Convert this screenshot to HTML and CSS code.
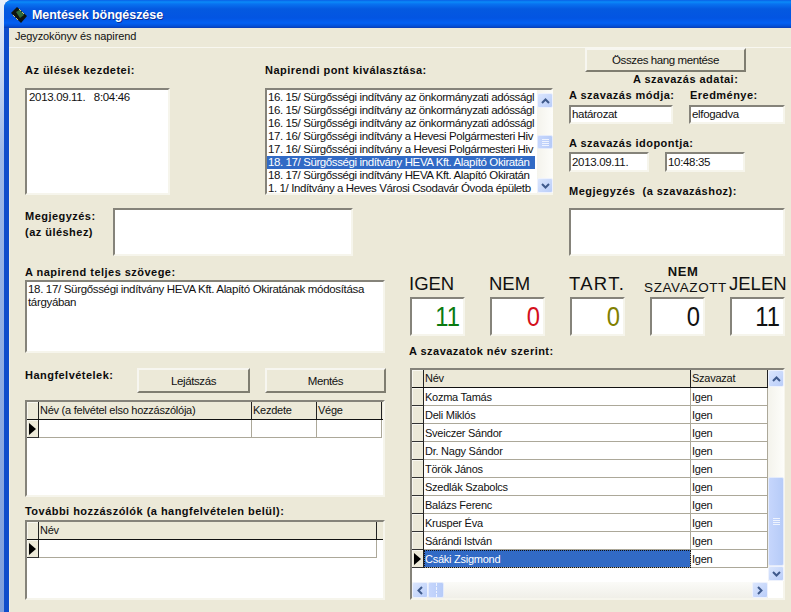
FILE: index.html
```html
<!DOCTYPE html>
<html lang="hu">
<head>
<meta charset="utf-8">
<title>Mentések böngészése</title>
<link rel="stylesheet" href="styles.css">
</head>
<body>
<div class="window">
  <div class="titlebar">
    <svg class="appicon" width="18" height="18" viewBox="0 0 18 18"><path d="M1 7 L7 1 L17 10 L11 17 Z" fill="#10140f"/><path d="M6 6 L10 3.8 L14 9 L10 12 Z" fill="#2f6b3a"/><path d="M3 9 L5 11 M6 12 L8 14 M9 3 L11 5 M12 6 L14 8" stroke="#c9c27a" stroke-width="1"/></svg>
    <span class="title">Mentések böngészése</span>
  </div>
  <div class="menubar"><span>Jegyzokönyv és napirend</span></div>
  <div class="client">
    <div class="upper">
      <div class="upper-left">
        <div class="lists">
          <div class="col-sessions">
            <div class="lbl">Az ülések kezdetei:</div>
            <div class="sunken listbox"><div class="item session">2013.09.11.&nbsp;&nbsp;&nbsp;8:04:46</div></div>
          </div>
          <div class="col-agenda">
            <div class="lbl">Napirendi pont kiválasztása:</div>
            <div class="sunken listbox agenda">
              <div class="items">
                <div class="item">16. 15/ Sürgősségi indítvány az önkormányzati adósságl</div>
                <div class="item">16. 15/ Sürgősségi indítvány az önkormányzati adósságl</div>
                <div class="item">16. 15/ Sürgősségi indítvány az önkormányzati adósságl</div>
                <div class="item">17. 16/ Sürgősségi indítvány a Hevesi Polgármesteri Hiv</div>
                <div class="item">17. 16/ Sürgősségi indítvány a Hevesi Polgármesteri Hiv</div>
                <div class="item selected">18. 17/ Sürgősségi indítvány HEVA Kft. Alapító Okiratán</div>
                <div class="item">18. 17/ Sürgősségi indítvány HEVA Kft. Alapító Okiratán</div>
                <div class="item">1. 1/ Indítvány a Heves Városi Csodavár Óvoda épületb</div>
              </div>
              <div class="vscroll list-scroll">
                <div class="sbtn"><svg width="9" height="6" viewBox="0 0 9 6"><path d="M1 5 L4.5 1.5 L8 5" class="chev"/></svg></div>
                <div class="sgap g1"></div>
                <div class="thumb t1"><i></i><i></i><i></i><i></i></div>
                <div class="sgap g2"></div>
                <div class="sbtn"><svg width="9" height="6" viewBox="0 0 9 6"><path d="M1 1 L4.5 4.5 L8 1" class="chev"/></svg></div>
              </div>
            </div>
          </div>
        </div>
        <div class="note-row">
          <div class="lbl note-lbl">Megjegyzés:<br>(az üléshez)</div>
          <div class="sunken note-box"></div>
        </div>
      </div>
      <div class="upper-right">
        <div class="raised btn btn-all">Összes hang mentése</div>
        <div class="lbl caption">A szavazás adatai:</div>
        <div class="pair labels-1"><div class="lbl w-mode">A szavazás módja:</div><div class="lbl">Eredménye:</div></div>
        <div class="pair inputs-1"><div class="sunken field f-mode">határozat</div><div class="sunken field f-result">elfogadva</div></div>
        <div class="lbl time-lbl">A szavazás idopontja:</div>
        <div class="pair inputs-2"><div class="sunken field f-date">2013.09.11.</div><div class="sunken field f-date">10:48:35</div></div>
        <div class="lbl vote-note-lbl">Megjegyzés&nbsp; (a szavazáshoz):</div>
        <div class="sunken vote-note"></div>
      </div>
    </div>
    <div class="lower">
      <div class="lower-left">
        <div class="lbl full-lbl">A napirend teljes szövege:</div>
        <div class="sunken fulltext">18. 17/ Sürgősségi indítvány HEVA Kft. Alapító Okiratának módosítása tárgyában</div>
        <div class="rec-row">
          <div class="lbl rec-lbl">Hangfelvételek:</div>
          <div class="raised btn btn-play">Lejátszás</div>
          <div class="raised btn btn-save">Mentés</div>
        </div>
        <div class="sunken grid grid-rec">
          <div class="row head">
            <div class="ind"></div><div class="cell c-rn">Név (a felvétel elso hozzászólója)</div><div class="cell c-rs">Kezdete</div><div class="cell c-re">Vége</div>
          </div>
          <div class="row">
            <div class="ind"><svg width="7" height="12" viewBox="0 0 7 12"><path d="M0 0 L7 6 L0 12 Z"/></svg></div><div class="cell c-rn"></div><div class="cell c-rs"></div><div class="cell c-re"></div>
          </div>
        </div>
        <div class="lbl more-lbl">További hozzászólók (a hangfelvételen belül):</div>
        <div class="sunken grid grid-more">
          <div class="row head"><div class="ind"></div><div class="cell c-mn">Név</div></div>
          <div class="row"><div class="ind"><svg width="7" height="12" viewBox="0 0 7 12"><path d="M0 0 L7 6 L0 12 Z"/></svg></div><div class="cell c-mn"></div></div>
        </div>
      </div>
      <div class="lower-right">
        <div class="counters">
          <div class="counter"><div class="c-label">IGEN</div><div class="sunken c-box green"><span class="c-num">11</span></div></div>
          <div class="counter"><div class="c-label">NEM</div><div class="sunken c-box red"><span class="c-num">0</span></div></div>
          <div class="counter"><div class="c-label tart">TART.</div><div class="sunken c-box olive"><span class="c-num">0</span></div></div>
          <div class="counter"><div class="c-label small"><span class="s1">NEM</span><span class="s2">SZAVAZOTT</span></div><div class="sunken c-box"><span class="c-num">0</span></div></div>
          <div class="counter"><div class="c-label">JELEN</div><div class="sunken c-box"><span class="c-num">11</span></div></div>
        </div>
        <div class="lbl names-lbl">A szavazatok név szerint:</div>
        <div class="sunken grid grid-votes">
          <div class="votes-main">
            <div class="row head"><div class="ind"></div><div class="cell c-vn">Név</div><div class="cell c-vv">Szavazat</div></div>
            <div class="row"><div class="ind"></div><div class="cell c-vn">Kozma Tamás</div><div class="cell c-vv">Igen</div></div>
            <div class="row"><div class="ind"></div><div class="cell c-vn">Deli Miklós</div><div class="cell c-vv">Igen</div></div>
            <div class="row"><div class="ind"></div><div class="cell c-vn">Sveiczer Sándor</div><div class="cell c-vv">Igen</div></div>
            <div class="row"><div class="ind"></div><div class="cell c-vn">Dr. Nagy Sándor</div><div class="cell c-vv">Igen</div></div>
            <div class="row"><div class="ind"></div><div class="cell c-vn">Török János</div><div class="cell c-vv">Igen</div></div>
            <div class="row"><div class="ind"></div><div class="cell c-vn">Szedlák Szabolcs</div><div class="cell c-vv">Igen</div></div>
            <div class="row"><div class="ind"></div><div class="cell c-vn">Balázs Ferenc</div><div class="cell c-vv">Igen</div></div>
            <div class="row"><div class="ind"></div><div class="cell c-vn">Krusper Éva</div><div class="cell c-vv">Igen</div></div>
            <div class="row"><div class="ind"></div><div class="cell c-vn">Sárándi István</div><div class="cell c-vv">Igen</div></div>
            <div class="row"><div class="ind"><svg width="7" height="12" viewBox="0 0 7 12"><path d="M0 0 L7 6 L0 12 Z"/></svg></div><div class="cell c-vn current">Csáki Zsigmond</div><div class="cell c-vv">Igen</div></div>
            <div class="hscroll">
              <div class="sbtn hb"><svg width="6" height="9" viewBox="0 0 6 9"><path d="M5 1 L1.5 4.5 L5 8" class="chev"/></svg></div>
              <div class="thumb h-thumb"><i></i><i></i><i></i><i></i></div>
              <div class="h-gap"></div>
              <div class="sbtn hb"><svg width="6" height="9" viewBox="0 0 6 9"><path d="M1 1 L4.5 4.5 L1 8" class="chev"/></svg></div>
            </div>
          </div>
          <div class="vscroll votes-scroll">
            <div class="sbtn tall"><svg width="9" height="6" viewBox="0 0 9 6"><path d="M1 5 L4.5 1.5 L8 5" class="chev"/></svg></div>
            <div class="sgap g3"></div>
            <div class="thumb t2"><i></i><i></i><i></i><i></i></div>
            <div class="sbtn"><svg width="9" height="6" viewBox="0 0 9 6"><path d="M1 1 L4.5 4.5 L8 1" class="chev"/></svg></div>
          </div>
        </div>
      </div>
    </div>
  </div>
</div>
</body>
</html>
```
FILE: styles.css
```css
* { box-sizing: border-box; }
html, body { margin: 0; height: 612px; overflow: hidden; }
body { background: linear-gradient(#e9effa 0, #9db8e8 25%, #7f9fdc 100%); padding-left: 4px; font-family: "Liberation Sans", Arial, sans-serif; font-size: 11.5px; letter-spacing: -.33px; color: #111; }
.window { width: 787px; height: 612px; display: flex; flex-direction: column; background: #0f4ccb; border-radius: 8px 0 0 0; overflow: hidden; }
.titlebar { height: 28px; flex: none; display: flex; align-items: center; padding-left: 6px; background: linear-gradient(#0a5fe6 0, #0a8bf8 2px, #0872f0 4px, #0459e0 9px, #0355e2 18px, #0360f2 23px, #0350d8 26px, #0a3cb4 28px); }
.appicon { flex: none; margin-top: 1px; }
.title { margin: 1px 0 0 4px; color: #fff; font-weight: 700; font-size: 12.5px; letter-spacing: -.05px; text-shadow: 1px 1px 0 #0a2e96; }
.menubar { height: 20px; flex: none; margin-left: 5px; padding: 0 0 0 6px; line-height: 17px; font-size: 11px; letter-spacing: -.13px; background: #ece9d8; border-bottom: 1px solid #f8f7f0; }
.client { flex: 1; margin-left: 5px; padding-left: 15px; border-left: 1px solid #f2f0e4; background: #ece9d8; display: flex; flex-direction: column; }
.lbl { font-weight: 700; font-size: 11px; letter-spacing: .47px; line-height: 14px; white-space: nowrap; color: #0c0c0c; }
.sunken { border: 2px solid; border-color: #85837a #f6f5ec #f6f5ec #85837a; background: #fff; }
.raised { border: 2px solid; border-color: #f7f6f0 #7f7d70 #7f7d70 #f7f6f0; background: #ece9d8; }
.btn { display: flex; align-items: center; justify-content: center; font-size: 11.5px; letter-spacing: -.4px; }

.upper { display: flex; height: 217px; flex: none; }
.upper-left { width: 544px; flex: none; }
.lists { display: flex; padding-top: 15px; }
.col-sessions { width: 240px; flex: none; }
.col-agenda { width: 288px; flex: none; }
.listbox { margin-top: 11px; height: 107px; }
.col-sessions .listbox { width: 145px; }
.item { height: 13px; line-height: 13px; padding-left: 1px; white-space: nowrap; }
.session { padding-left: 2px; height: 15px; line-height: 15px; }
.agenda { display: flex; }
.items { width: 268px; flex: none; margin-right: 2px; padding-top: 1px; letter-spacing: -.4px; }
.selected { background: #316ac5; color: #fff; }
.note-row { display: flex; margin-top: 13px; }
.note-lbl { width: 88px; flex: none; line-height: 16px; }
.note-box { width: 240px; height: 48px; }
.upper-right { flex: none; width: 222px; }
.btn-all { margin-left: 16px; width: 161px; height: 24px; }
.caption { padding-left: 64px; height: 16px; }
.pair { display: flex; }
.labels-1 { height: 17px; }
.w-mode { width: 121px; }
.inputs-1 { gap: 16px; }
.field { height: 19px; line-height: 15px; padding-left: 1px; }
.f-mode { width: 104px; }
.f-result { width: 96px; }
.time-lbl { margin-top: 12px; height: 16px; }
.inputs-2 { gap: 16px; }
.f-date { width: 80px; height: 20px; line-height: 16px; }
.vote-note-lbl { margin-top: 12px; height: 24px; }
.vote-note { width: 216px; height: 48px; }

.lower { display: flex; flex: 1; }
.lower-left { width: 361px; flex: none; }
.full-lbl { height: 15px; }
.fulltext { width: 360px; height: 73px; padding: 1px 0 0 1px; line-height: 13px; }
.rec-row { display: flex; margin-top: 15px; }
.rec-lbl { width: 112px; flex: none; }
.btn-play { width: 113px; height: 25px; margin-right: 15px; }
.btn-save { width: 121px; height: 25px; }
.grid { display: block; }
.grid-rec { width: 360px; height: 97px; margin-top: 7px; }
.more-lbl { margin-top: 7px; height: 16px; }
.grid-more { width: 360px; height: 80px; }
.row { display: flex; height: 18px; }
.row.head { background: #ece9d8; height: 18px; border-bottom: 1px solid #111; }
.ind { width: 12px; flex: none; background: #ece9d8; border-right: 1px solid #222; border-bottom: 1px solid #333; box-shadow: inset 1px 1px 0 #f8f7f0; display: flex; align-items: center; justify-content: center; }
.ind svg { fill: #000; }
.head .ind { border-bottom: 0; }
.cell { border-right: 1px solid #aca899; border-bottom: 1px solid #aca899; padding-left: 1px; line-height: 19px; white-space: nowrap; overflow: hidden; font-size: 11px; letter-spacing: -.25px; }
.head .cell { border-right-color: #222; border-bottom: 0; line-height: 17px; }
.c-rn { width: 213px; } .c-rs { width: 65px; } .c-re { width: 65px; }
.c-mn { width: 338px; }
.c-vn { width: 267px; } .c-vv { width: 77px; }
.current { background: #316ac5; color: #fff; outline: 1px dotted #111; outline-offset: -1px; }

.lower-right { margin-left: 24px; width: 381px; flex: none; }
.counters { display: flex; height: 72px; }
.counter { width: 80px; flex: none; }
.c-label { height: 32px; width: 55px; display: flex; flex-direction: column; justify-content: flex-end; align-items: flex-start; white-space: nowrap; font-size: 18.5px; letter-spacing: 0; line-height: 20px; padding-bottom: 3px; margin-left: -1px; color: #111; }
.tart { letter-spacing: 1.3px; }
.c-label.small { font-size: 13.5px; line-height: 16px; letter-spacing: .6px; align-items: center; justify-content: flex-start; padding: 0; margin: -1px 0 1px 8px; }
.s1, .s2 { display: block; }
.s1 { font-weight: 700; font-size: 13px; margin-left: -5px; }
.c-box { width: 55px; height: 39px; font-size: 28px; line-height: 35px; text-align: right; padding-right: 3px; letter-spacing: 0; color: #111; }
.c-num { display: block; transform: scaleX(.85); transform-origin: right center; }
.green { color: #0a7a10; } .red { color: #d4101c; } .olive { color: #808000; }
.names-lbl { margin: 7px 0 0 -1px; height: 24px; }
.grid-votes { width: 375px; height: 232px; display: flex; margin-top: 0; }
.votes-main { width: 356px; flex: none; display: flex; flex-direction: column; }
.hscroll { display: flex; margin-top: auto; height: 16px; background: linear-gradient(#fbfbf8, #f0efe8); }
.h-gap { flex: 1; }
.h-thumb { width: 16px; height: 16px; flex-direction: row; }
.vscroll { display: flex; flex-direction: column; width: 16px; flex: none; background: linear-gradient(90deg, #f4f3ec, #fdfdfa); }
.sbtn { flex: none; width: 100%; height: 15px; background: linear-gradient(135deg, #dbe6fd, #b9cdf9); border: 1px solid #eef2fd; border-radius: 2px; display: flex; align-items: center; justify-content: center; }
.hb { width: 16px; height: 16px; }
.tall { height: 17px; }
.chev { fill: none; stroke: #3f5a8c; stroke-width: 2; }
.thumb { background: linear-gradient(90deg, #c6d6fc, #b6cbf8); border: 1px solid #e4ebfb; border-radius: 2px; display: flex; flex-direction: column; align-items: center; justify-content: center; gap: 1px; }
.thumb i { display: block; width: 7px; height: 1px; background: #eef3fe; }
.h-thumb i { width: 1px; height: 7px; }
.list-scroll { height: 103px; padding-top: 3px; }
.g1 { height: 27px; }
.t1 { height: 14px; }
.g2 { flex: 1; }
.votes-scroll { height: 211px; }
.g3 { height: 90px; }
.t2 { height: 89px; }
```
